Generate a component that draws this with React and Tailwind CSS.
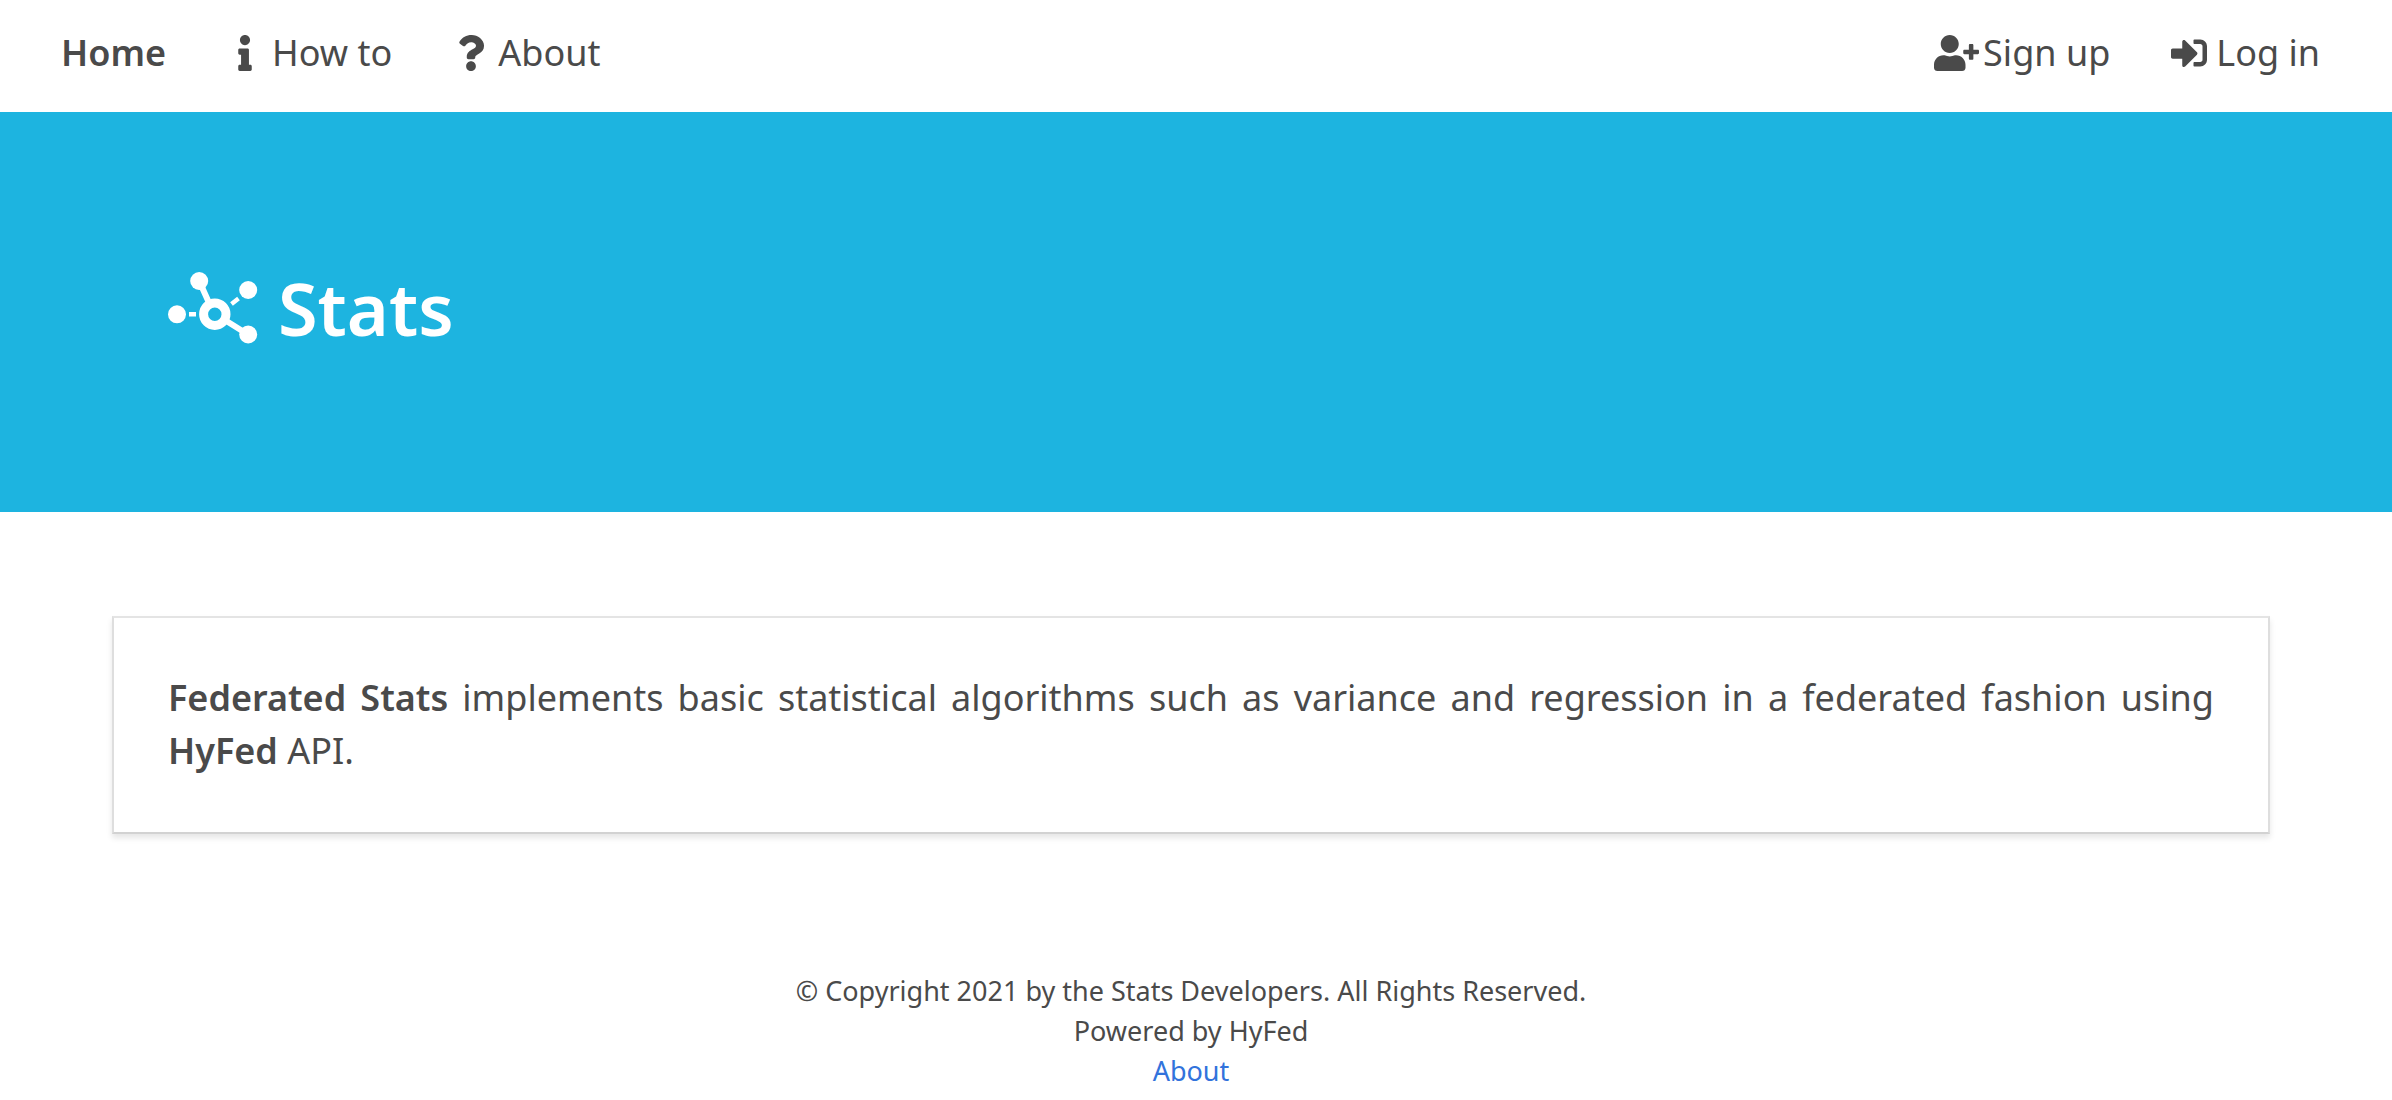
import { FaInfo, FaQuestion, FaUserPlus, FaSignInAlt } from "react-icons/fa";

function NavLink({ icon: Icon, iconWidth = "w-9", children, className = "" }) {
  return (
    <a href="#" className={`flex items-center px-[26px] ${className}`}>
      {Icon && (
        <span className="flex w-[54px] justify-center">
          <Icon className={`h-9 shrink-0 ${iconWidth}`} aria-hidden="true" />
        </span>
      )}
      {children}
    </a>
  );
}

function Logo() {
  return (
    <svg viewBox="0 0 90 72" className="h-[72px] w-[90px]" fill="#fff" stroke="#fff" aria-hidden="true">
      <g stroke="none">
        <circle cx="9" cy="42.3" r="9" />
        <circle cx="31.2" cy="9" r="9" />
        <circle cx="80.2" cy="18" r="9" />
        <circle cx="80.2" cy="62.5" r="9" />
      </g>
      <circle cx="46.8" cy="42.2" r="11.2" fill="none" strokeWidth="9" />
      <path d="M31.2 9L42 33M56 47.5L80 62.5" strokeWidth="6" />
      <path d="M21 42.2H28M63.5 32L70.5 26.5" strokeWidth="4.4" />
    </svg>
  );
}

export default function App() {
  return (
    <div className="min-h-screen bg-white font-['Noto_Sans','Open_Sans',sans-serif] text-4xl text-[#4a4a4a]">
      <nav className="flex h-28 justify-between pr-[46px] pb-1.5 pl-[35px]">
        <div className="flex">
          <NavLink className="font-semibold">Home</NavLink>
          <NavLink icon={FaInfo}>How to</NavLink>
          <NavLink icon={FaQuestion}>About</NavLink>
        </div>
        <div className="flex">
          <NavLink icon={FaUserPlus} iconWidth="w-[45px]">Sign up</NavLink>
          <NavLink icon={FaSignInAlt}>Log in</NavLink>
        </div>
      </nav>

      <header className="flex h-[400px] items-center bg-[#1db4e0] px-[168px] pb-2 text-white">
        <h1 className="flex items-center gap-5 text-7xl font-semibold">
          <Logo />
          Stats
        </h1>
      </header>

      <div className="pr-2.5">
        <main className="px-28 pt-26">
          <p className="border-2 border-t-[#e4e4e4] border-r-[#dedede] border-b-[#d2d2d2] border-l-[#dedede] px-[54px] pt-[53px] pb-[55px] text-justify leading-[53px] shadow-[0_4px_6px_rgba(10,10,10,0.1)]">
            <strong className="font-semibold">Federated Stats</strong> implements basic statistical
            algorithms such as variance and regression in a federated fashion using{" "}
            <strong className="font-semibold">HyFed</strong> API.
          </p>
        </main>

        <footer className="pt-[137px] text-center text-[27px] leading-10">
          <p>© Copyright 2021 by the Stats Developers. All Rights Reserved.</p>
          <p>Powered by HyFed</p>
          <p>
            <a href="#" className="text-[#3273dc]">About</a>
          </p>
        </footer>
      </div>
    </div>
  );
}
